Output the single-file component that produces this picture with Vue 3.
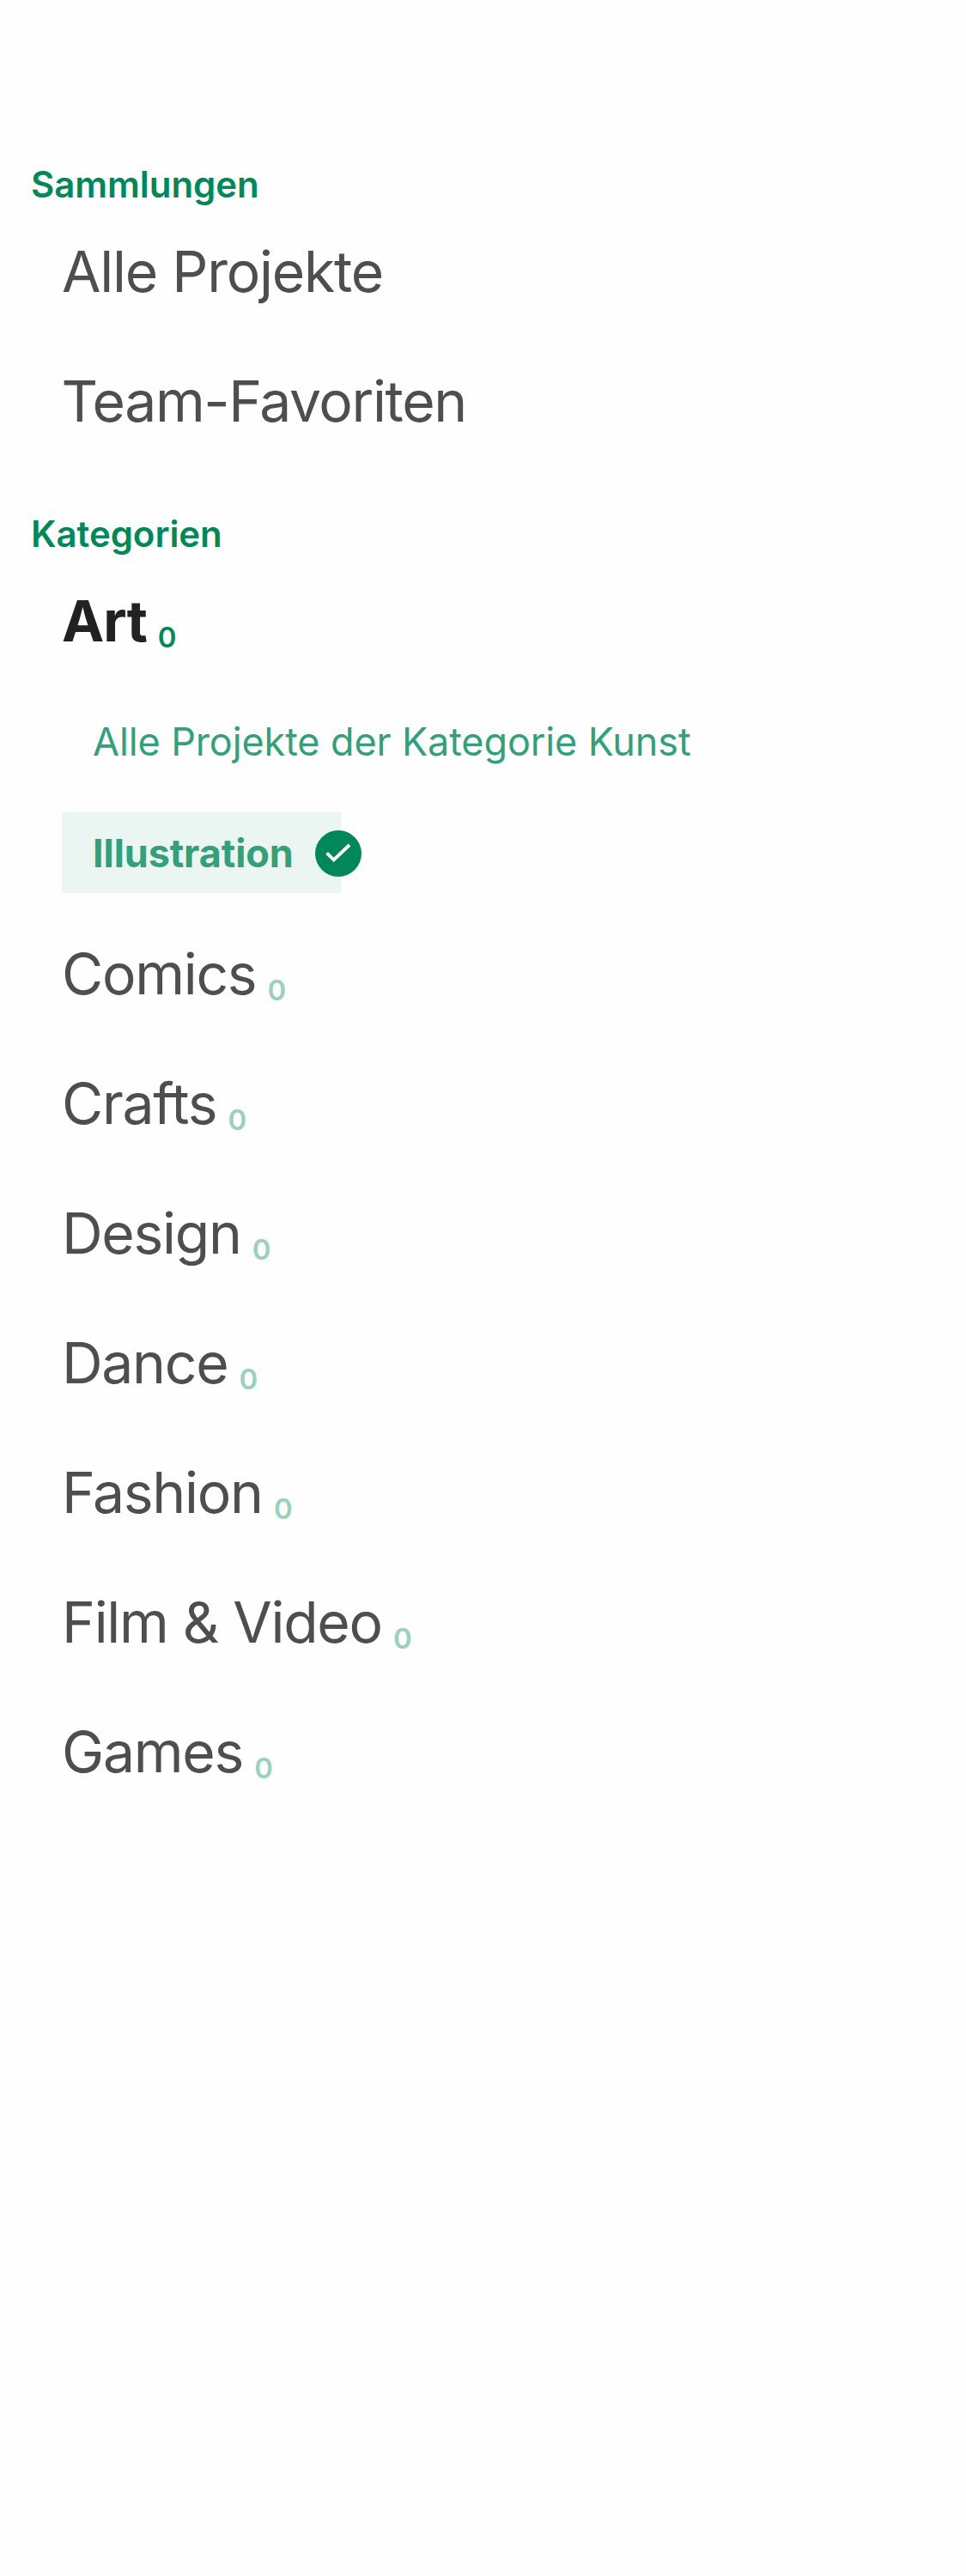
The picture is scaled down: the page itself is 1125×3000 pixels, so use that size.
<script setup>
const collections = [
  { name: 'Alle Projekte', cls: 'projects' },
  { name: 'Team-Favoriten', cls: 'favorites' },
]
const categories = ['Comics', 'Crafts', 'Design', 'Dance', 'Fashion', 'Film & Video', 'Games']
</script>

<template>
  <nav class="menu">
    <h2>Sammlungen</h2>
    <a v-for="c in collections" :key="c.name" class="row" :class="c.cls">{{ c.name }}</a>
    <h2 class="second">Kategorien</h2>
    <a class="row active">Art<span class="count">0</span></a>
    <a class="all">Alle Projekte der Kategorie Kunst</a>
    <div class="selected">
      <span>Illustration</span>
      <svg class="check" viewBox="0 0 54 54">
        <circle cx="27" cy="27" r="27" fill="#028858" />
        <path d="M13.6 26.4L21.7 34.3L40 17" fill="none" stroke="#fff" stroke-width="3.8" />
      </svg>
    </div>
    <a v-for="c in categories" :key="c" class="row">{{ c }}<span class="count">0</span></a>
  </nav>
</template>

<style>
body { margin: 0; background: #fefefe; }
</style>
<style scoped>
.menu { font-family: Inter, sans-serif; padding: 189px 36px 0; height: 3000px; box-sizing: border-box; color: #4e4e4e; }
h2 { margin: 0; height: 52px; font-size: 42px; line-height: 51px; font-weight: 600; letter-spacing: -0.06px; color: #028858; }
.second { margin-top: 53px; }
.row { display: block; height: 151px; line-height: 151px; padding-left: 36px; font-size: 66px; white-space: nowrap; letter-spacing: -1.3px; }
.projects { letter-spacing: -1.25px; }
.favorites { padding-left: 35.5px; letter-spacing: -1.4px; }
.count { font-size: 33px; font-weight: 560; letter-spacing: 0; color: #9ad0bd; margin-left: 13.2px; position: relative; top: 7px; }
.active { font-weight: 700; color: #222; letter-spacing: -0.9px; }
.active .count { color: #028858; margin-left: 12.8px; }
.all { display: block; height: 147px; line-height: 130px; padding-left: 72px; font-size: 45px; color: #359f79; letter-spacing: -0.12px; }
.selected { margin-left: 36px; width: 325px; height: 94px; display: flex; align-items: center; padding: 1px 0 0 36px; box-sizing: border-box; background: #ebf5f1; color: #359f79; font-size: 45px; font-weight: 700; letter-spacing: -0.1px; margin-bottom: 19px; }
.check { width: 54px; height: 54px; margin: 1px 0 0 25.4px; flex: none; }
</style>
